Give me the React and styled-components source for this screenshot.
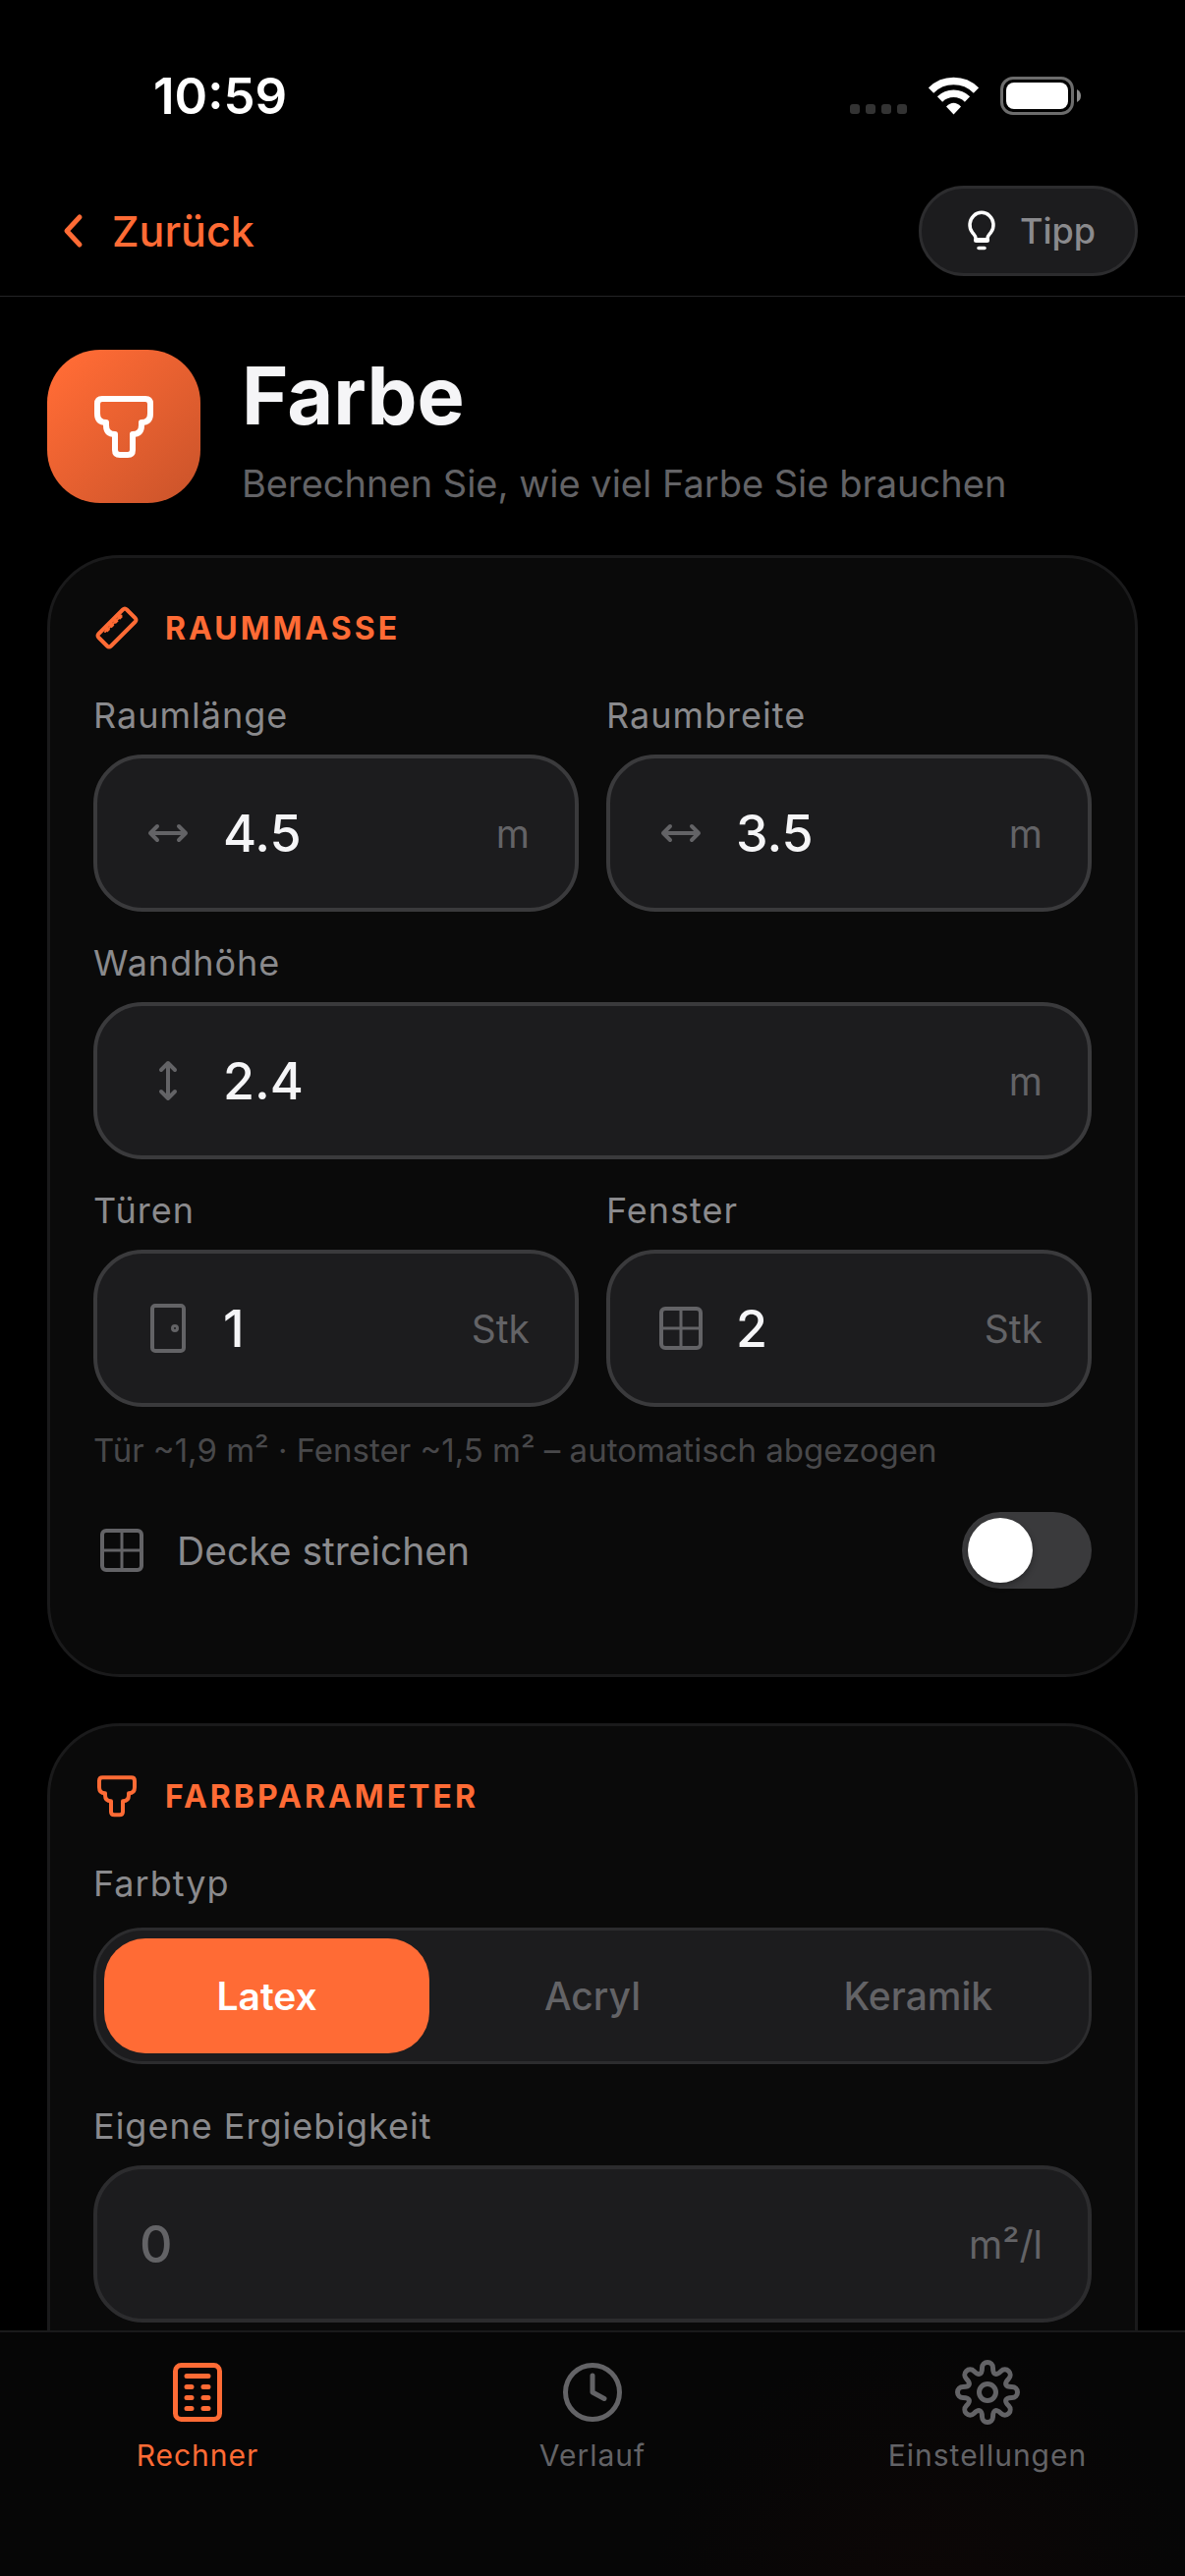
import React, { useState } from 'react';
import styled, { createGlobalStyle } from 'styled-components';

const GlobalStyle = createGlobalStyle`
* {
    box-sizing: border-box;
}

body {
    margin: 0;
    background: #000;
    color: #f5f5f7;
    font-family: "Inter", "Liberation Sans", sans-serif;
}

button, input {
    font-family: inherit;
}
`;

const Screen = styled.div`
display: flex;
flex-direction: column;
height: 100vh;
overflow: hidden;
`;

const StatusBar = styled.div`
display: flex;
align-items: center;
justify-content: space-between;
height: 169px;
padding: 26px 106px 0 156px;
flex-shrink: 0;
`;

const Clock = styled.span`
font-size: 51px;
font-weight: 600;
color: #fff;
`;

const StatusIcons = styled.div`
display: flex;
align-items: center;
gap: 22px;
`;

const NavBar = styled.header`
display: flex;
align-items: center;
justify-content: space-between;
padding: 20px 48px;
border-bottom: 1px solid #242426;
flex-shrink: 0;
`;

const BackButton = styled.button`
display: flex;
align-items: center;
gap: 12px;
padding: 0;
border: 0;
background: none;
color: #ff6b35;
font-size: 43px;
font-weight: 500;
`;

const TipButton = styled.button`
display: flex;
align-items: center;
gap: 18px;
height: 92px;
padding: 0 40px;
border: 3px solid #2c2c2e;
border-radius: 46px;
background: #1c1c1e;
color: #8a8a8d;
font-size: 36px;
font-weight: 500;

svg {
    color: #fff;
}
`;

const Content = styled.main`
display: flex;
flex-direction: column;
flex: 1;
min-height: 0;
padding: 54px 48px 0;
overflow: hidden;
`;

const Intro = styled.div`
display: flex;
align-items: flex-start;
gap: 42px;
margin-bottom: 49px;
`;

const IntroTile = styled.div`
display: flex;
align-items: center;
justify-content: center;
width: 156px;
height: 156px;
border-radius: 54px;
background: linear-gradient(135deg, #ff6b35 10%, #c9532a 100%);
color: #fff;
flex-shrink: 0;
`;

const Title = styled.h1`
margin: 0;
font-size: 81px;
line-height: 94px;
font-weight: 700;
`;

const Subtitle = styled.p`
margin: 18px 0 0;
font-size: 38px;
line-height: 48px;
color: #636366;
`;

const Card = styled.section`
display: flex;
flex-direction: column;
padding: 47px 44px;
margin-bottom: 47px;
border: 3px solid #1a1a1b;
border-radius: 74px;
background: #0a0a0a;
flex-shrink: 0;

&:last-child {
    padding-bottom: 120px;
}
`;

const CardTitle = styled.h2`
display: flex;
align-items: center;
gap: 25px;
height: 48px;
margin: 0 0 41px;
color: #ff6b35;
font-size: 32px;
font-weight: 700;
letter-spacing: 3px;
text-transform: uppercase;
`;

const Fields = styled.div`
display: grid;
grid-template-columns: 1fr 1fr;
gap: 28px;
`;

const FieldWrapper = styled.div`
grid-column: ${(props) => (props.$wide ? '1 / -1' : 'auto')};
min-width: 0;
`;

const Label = styled.label`
display: block;
margin-bottom: 16px;
font-size: 36px;
line-height: 48px;
letter-spacing: 1px;
color: #8a8a8d;
`;

const InputBox = styled.div`
display: flex;
align-items: center;
gap: 27px;
height: 160px;
padding: 0 46px 0 43px;
border: 4px solid ${(props) => (props.$filled ? '#3a3a3c' : '#2c2c2e')};
border-radius: 50px;
background: #1c1c1e;
color: #636366;
`;

const Input = styled.input`
flex: 1;
min-width: 0;
padding: 0;
border: 0;
outline: 0;
background: none;
color: #f5f5f7;
font-size: 52px;
font-weight: 500;

&::placeholder {
    color: #636366;
    opacity: 1;
}
`;

const Unit = styled.span`
font-size: 39px;
`;

const Hint = styled.p`
margin: 22px 0 41px;
font-size: 33px;
line-height: 44px;
color: #48484a;
`;

const ToggleRow = styled.label`
display: flex;
align-items: center;
gap: 27px;
height: 78px;
margin-bottom: 40px;
color: #8a8a8d;
font-size: 39px;

svg {
    color: #636366;
}
`;

const ToggleText = styled.span`
flex: 1;
`;

const Toggle = styled.input`
appearance: none;
width: 132px;
height: 78px;
margin: 0;
padding: 6px;
border-radius: 39px;
background: ${(props) => (props.checked ? '#ff6b35' : '#3a3a3c')};

&::before {
    content: '';
    display: block;
    width: 66px;
    height: 66px;
    margin-left: ${(props) => (props.checked ? '54px' : '0')};
    border-radius: 50%;
    background: #fff;
    box-shadow: 0 3px 6px rgba(0, 0, 0, 0.3);
}
`;

const SegmentGroup = styled.fieldset`
min-width: 0;
margin: 0 0 39px;
padding: 0;
border: 0;
`;

const SegmentLegend = styled.legend`
padding: 0;
margin-bottom: 21px;
font-size: 36px;
line-height: 48px;
letter-spacing: 1px;
color: #8a8a8d;
`;

const Segments = styled.div`
display: grid;
grid-template-columns: repeat(3, 1fr);
padding: 8px;
border: 3px solid #2c2c2e;
border-radius: 50px;
background: #1c1c1e;
`;

const Segment = styled.label`
display: flex;
align-items: center;
justify-content: center;
height: 117px;
border-radius: 42px;
background: ${(props) => (props.$active ? '#ff6b35' : 'transparent')};
color: ${(props) => (props.$active ? '#fff' : '#636366')};
font-size: 39px;
font-weight: ${(props) => (props.$active ? 600 : 500)};

input {
    appearance: none;
    width: 0;
    height: 0;
    margin: 0;
}
`;

const TabBar = styled.nav`
display: grid;
grid-template-columns: repeat(3, 1fr);
height: 250px;
padding-top: 28px;
border-top: 2px solid #1a1a1b;
background: radial-gradient(circle 280px at 78% 115%, #0d0706, #060606);
flex-shrink: 0;
`;

const Tab = styled.a`
display: flex;
flex-direction: column;
align-items: center;
gap: 12px;
color: ${(props) => (props.$active ? '#ff6b35' : '#636366')};
font-size: 30px;
line-height: 38px;
letter-spacing: 1px;
text-decoration: none;
`;

const IconSvg = styled.svg`
flex-shrink: 0;
fill: none;
stroke: currentColor;
stroke-linecap: round;
stroke-linejoin: round;
`;

const Icon = ({ size, box = size, stroke = 4, children }) => (
    <IconSvg width={size} height={size} viewBox={`0 0 ${box} ${box}`} strokeWidth={stroke} aria-hidden="true">
        {children}
    </IconSvg>
);

const BrushIcon = ({ size }) => (
    <Icon size={size} box={72} stroke={6}>
        <path d="M14 8H58Q63 8 63 13V23Q63 32 54 32V35Q54 44 45 44V60Q45 65 40 65H32Q27 65 27 60V44Q18 44 18 35V32Q9 32 9 23V13Q9 8 14 8Z" />
    </Icon>
);

const RulerIcon = () => (
    <Icon size={48}>
        <path d="M30 5.5Q32 3.5 34 5.5L42.5 14Q44.5 16 42.5 18L18 42.5Q16 44.5 14 42.5L5.5 34Q3.5 32 5.5 30Z" />
        <path d="M28.5 11.5L12 28" strokeWidth="2" />
        <path d="M28.5 11.5L12 28" strokeWidth="4" strokeDasharray="4 2" strokeLinecap="butt" />
    </Icon>
);

const WidthIcon = () => (
    <Icon size={58}>
        <path d="M11 29H47M18 22L11 29L18 36M40 22L47 29L40 36" />
    </Icon>
);

const HeightIcon = () => (
    <Icon size={58}>
        <path d="M29 11V47M22 18L29 11L36 18M22 40L29 47L36 40" />
    </Icon>
);

const DoorIcon = () => (
    <Icon size={58}>
        <rect x="13" y="6" width="32" height="46" rx="3" />
        <circle cx="36" cy="29" r="2.5" strokeWidth="3" />
    </Icon>
);

const WindowIcon = () => (
    <Icon size={58}>
        <rect x="9" y="9" width="40" height="40" rx="4" />
        <path d="M29 9V49M9 29H49" strokeWidth="3" />
    </Icon>
);

const BulbIcon = () => (
    <Icon size={42} stroke={3.5}>
        <path d="M15 30V28.5C15 26 13 24.5 11.5 22.5A12 12.5 0 1 1 30.5 22.5C29 24.5 27 26 27 28.5V30" />
        <path d="M15.5 30.5H26.5" strokeWidth="5" />
        <path d="M18 38.5H24" />
    </Icon>
);

const CalculatorIcon = () => (
    <Icon size={66} stroke={5}>
        <rect x="10.5" y="5.5" width="45" height="55" rx="6" />
        <path d="M22 16.5H44M22 27.5H27M39 27.5H44M22 38.5H27M39 38.5H44M22 49.5H27M39 49.5H44" />
    </Icon>
);

const HistoryIcon = () => (
    <Icon size={66} stroke={5}>
        <circle cx="33" cy="33" r="27.5" />
        <path d="M33 16V33L45 39.5" />
    </Icon>
);

// eight round teeth, one every 45 degrees
const gearPath = () => {
    const point = (r, side, i) => {
        const a = (i * Math.PI) / 4;
        const x = 33 + r * Math.cos(a) - side * Math.sin(a);
        const y = 33 + r * Math.sin(a) + side * Math.cos(a);
        return `${x.toFixed(2)} ${y.toFixed(2)}`;
    };
    let d = `M${point(25, -5.5, 0)}`;
    for (let i = 0; i < 8; i++) {
        d += `A5.5 5.5 0 0 1 ${point(25, 5.5, i)}`;
        d += `C${point(18, 5.5, i)} ${point(18, -5.5, i + 1)} ${point(25, -5.5, i + 1)}`;
    }
    return `${d}Z`;
};

const SettingsIcon = () => (
    <Icon size={66} stroke={5}>
        <path d={gearPath()} />
        <circle cx="33" cy="33" r="8.5" />
    </Icon>
);

const CellularDots = () => (
    <svg width="58" height="39" viewBox="0 0 58 39" fill="#333" aria-hidden="true">
        <rect x="0" y="28" width="10" height="10" rx="3" />
        <rect x="16" y="28" width="10" height="10" rx="3" />
        <rect x="32" y="28" width="10" height="10" rx="3" />
        <rect x="48" y="28" width="10" height="10" rx="3" />
    </svg>
);

const WifiIcon = () => (
    <svg width="51" height="39" viewBox="0 0 51 39" fill="none" stroke="#fff" strokeWidth="7.5" aria-hidden="true">
        <path d="M2.5 14A32.5 32.5 0 0 1 48.5 14" />
        <path d="M11.5 23A20 20 0 0 1 39.5 23" />
        <path d="M18 30.5Q25.5 23 33 30.5L25.5 38.5Z" fill="#fff" stroke="none" />
    </svg>
);

const BatteryIcon = () => (
    <svg width="82" height="39" viewBox="0 0 82 39" fill="none" aria-hidden="true">
        <rect x="1.5" y="1.5" width="72" height="36" rx="11.5" stroke="#6c6c6c" strokeWidth="3" />
        <rect x="6" y="6" width="63" height="27" rx="8" fill="#fff" />
        <path d="M78 13Q82 15 82 19.5Q82 24 78 26Z" fill="#8a8a8a" />
    </svg>
);

function Field({ id, label, icon, unit, value, placeholder, onChange, wide }) {
    return (
        <FieldWrapper $wide={wide}>
            <Label htmlFor={id}>{label}</Label>
            <InputBox $filled={value !== ''}>
                {icon}
                <Input
                    id={id}
                    type="text"
                    inputMode="decimal"
                    value={value}
                    placeholder={placeholder}
                    onChange={(e) => onChange(id, e.target.value)}
                />
                <Unit>{unit}</Unit>
            </InputBox>
        </FieldWrapper>
    )
}

const paintTypes = ['Latex', 'Acryl', 'Keramik'];

export default function App() {

    const [values, setValues] = useState({
        length: '4.5',
        width: '3.5',
        height: '2.4',
        doors: '1',
        windows: '2',
        coverage: ''
    });
    const [ceiling, setCeiling] = useState(false);
    const [paintType, setPaintType] = useState('Latex');

    const setValue = (id, value) => setValues({ ...values, [id]: value });

    return (
        <Screen>
            <GlobalStyle />
            <StatusBar>
                <Clock>10:59</Clock>
                <StatusIcons>
                    <CellularDots />
                    <WifiIcon />
                    <BatteryIcon />
                </StatusIcons>
            </StatusBar>
            <NavBar>
                <BackButton type="button">
                    <Icon size={54} stroke={5}>
                        <path d="M33 13L20 27L33 41" />
                    </Icon>
                    Zurück
                </BackButton>
                <TipButton type="button">
                    <BulbIcon />
                    Tipp
                </TipButton>
            </NavBar>
            <Content>
                <Intro>
                    <IntroTile>
                        <BrushIcon size={72} />
                    </IntroTile>
                    <div>
                        <Title>Farbe</Title>
                        <Subtitle>Berechnen Sie, wie viel Farbe Sie brauchen</Subtitle>
                    </div>
                </Intro>
                <Card>
                    <CardTitle>
                        <RulerIcon />
                        Raummasse
                    </CardTitle>
                    <Fields>
                        <Field id="length" label="Raumlänge" icon={<WidthIcon />} unit="m" value={values.length} onChange={setValue} />
                        <Field id="width" label="Raumbreite" icon={<WidthIcon />} unit="m" value={values.width} onChange={setValue} />
                        <Field id="height" label="Wandhöhe" icon={<HeightIcon />} unit="m" value={values.height} onChange={setValue} wide />
                        <Field id="doors" label="Türen" icon={<DoorIcon />} unit="Stk" value={values.doors} onChange={setValue} />
                        <Field id="windows" label="Fenster" icon={<WindowIcon />} unit="Stk" value={values.windows} onChange={setValue} />
                    </Fields>
                    <Hint>Tür ~1,9 m² · Fenster ~1,5 m² – automatisch abgezogen</Hint>
                    <ToggleRow>
                        <WindowIcon />
                        <ToggleText>Decke streichen</ToggleText>
                        <Toggle type="checkbox" checked={ceiling} onChange={(e) => setCeiling(e.target.checked)} />
                    </ToggleRow>
                </Card>
                <Card>
                    <CardTitle>
                        <BrushIcon size={48} />
                        Farbparameter
                    </CardTitle>
                    <SegmentGroup>
                        <SegmentLegend>Farbtyp</SegmentLegend>
                        <Segments>
                            {paintTypes.map((type) => (
                                <Segment key={type} $active={type === paintType}>
                                    <input
                                        type="radio"
                                        name="paintType"
                                        value={type}
                                        checked={type === paintType}
                                        onChange={() => setPaintType(type)}
                                    />
                                    {type}
                                </Segment>
                            ))}
                        </Segments>
                    </SegmentGroup>
                    <Field id="coverage" label="Eigene Ergiebigkeit" unit="m²/l" value={values.coverage} placeholder="0" onChange={setValue} wide />
                </Card>
            </Content>
            <TabBar>
                <Tab href="#rechner" $active>
                    <CalculatorIcon />
                    Rechner
                </Tab>
                <Tab href="#verlauf">
                    <HistoryIcon />
                    Verlauf
                </Tab>
                <Tab href="#einstellungen">
                    <SettingsIcon />
                    Einstellungen
                </Tab>
            </TabBar>
        </Screen>
    )
}
